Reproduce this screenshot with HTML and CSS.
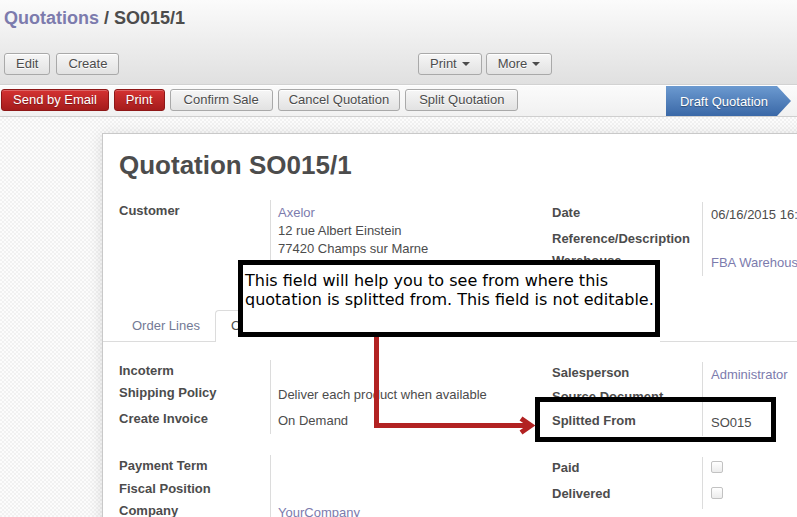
FILE: index.html
```html
<!DOCTYPE html>
<html>
<head>
<meta charset="utf-8">
<title>Quotations / SO015/1</title>
<link rel="stylesheet" href="styles.css">
</head>
<body>
<div class="page">
  <div class="header">
    <h2 class="crumbs"><a class="link">Quotations</a> / SO015/1</h2>
    <div class="cp">
      <div class="cp-left">
        <button class="btn">Edit</button>
        <button class="btn">Create</button>
      </div>
      <div class="cp-mid">
        <button class="btn">Print<span class="caret"></span></button>
        <button class="btn">More<span class="caret"></span></button>
      </div>
    </div>
  </div>
  <div class="statusbar">
    <div class="actions">
      <button class="btn btn-red">Send by Email</button>
      <button class="btn btn-red">Print</button>
      <button class="btn btn-wide">Confirm Sale</button>
      <button class="btn btn-narrow">Cancel Quotation</button>
      <button class="btn btn-wide">Split Quotation</button>
    </div>
    <div class="stage">Draft Quotation</div>
  </div>
  <div class="content">
    <div class="sheet">
      <h1 class="title">Quotation SO015/1</h1>

      <div class="group group-top">
        <div class="half half-l rows-auto">
          <div class="lbl">Customer</div>
          <div class="val"><a class="link">Axelor</a><br>12 rue Albert Einstein<br>77420 Champs sur Marne</div>
        </div>
        <div class="half half-r rows-26-22-26">
          <div class="lbl">Date</div>
          <div class="val">06/16/2015 16:48:22</div>
          <div class="lbl">Reference/Description</div>
          <div class="val"></div>
          <div class="lbl">Warehouse</div>
          <div class="val"><a class="link">FBA Warehouse</a></div>
        </div>
      </div>

      <div class="tabs">
        <div class="tab tab-first">Order Lines</div>
        <div class="tab tab-active">Other Information</div>
      </div>

      <div class="group group-2">
        <div class="half half-l rows-22-25-26">
          <div class="lbl">Incoterm</div>
          <div class="val"></div>
          <div class="lbl">Shipping Policy</div>
          <div class="val">Deliver each product when available</div>
          <div class="lbl">Create Invoice</div>
          <div class="val">On Demand</div>
        </div>
        <div class="half half-r rows-24-24-26">
          <div class="lbl">Salesperson</div>
          <div class="val"><a class="link">Administrator</a></div>
          <div class="lbl">Source Document</div>
          <div class="val"></div>
          <div class="lbl">Splitted From</div>
          <div class="val">SO015</div>
        </div>
      </div>

      <div class="group group-3">
        <div class="half half-l rows-22-22-22">
          <div class="lbl">Payment Term</div>
          <div class="val"></div>
          <div class="lbl">Fiscal Position</div>
          <div class="val"></div>
          <div class="lbl">Company</div>
          <div class="val"><a class="link">YourCompany</a></div>
        </div>
        <div class="half half-r rows-26-26">
          <div class="lbl">Paid</div>
          <div class="val"><span class="check"></span></div>
          <div class="lbl">Delivered</div>
          <div class="val"><span class="check"></span></div>
        </div>
      </div>
    </div>
  </div>

  <div class="note">This field will help you to see from where this<br>quotation is splitted from. This field is not editable.</div>
  <div class="highlight"></div>
  <svg class="arrow" width="797" height="517" viewBox="0 0 797 517">
    <path d="M376.5 337 V425.5 H528" fill="none" stroke="#b22222" stroke-width="5"/>
    <polyline points="521,418.5 531,425.5 521,432.5" fill="none" stroke="#b22222" stroke-width="5" stroke-linejoin="miter"/>
  </svg>
</div>
</body>
</html>
```
FILE: styles.css
```css
* { box-sizing: border-box; }
html, body { margin: 0; padding: 0; overflow: hidden; }
body {
  font-family: "Liberation Sans", Arial, sans-serif;
  font-size: 13px;
  color: #4c4c4c;
  background: #fff;
}
.page {
  position: relative;
  width: 797px;
  height: 517px;
  overflow: hidden;
}
.link { color: #7c7bad; text-decoration: none; }

/* header */
.header {
  height: 85px;
  padding: 0 4px;
  background: linear-gradient(#fbfbfb, #e0e0e0);
  border-bottom: 1px solid #d2d2d2;
}
.crumbs {
  margin: 0;
  padding-top: 7px;
  font-size: 18px;
  line-height: 22px;
  font-weight: bold;
  color: #4c4c4c;
}
.cp { display: flex; margin-top: 24px; }
.cp-left { width: 414px; display: flex; gap: 6px; }
.cp-mid { display: flex; gap: 4px; }

.btn {
  height: 22px;
  padding: 0 11px;
  font-family: "Liberation Sans", Arial, sans-serif;
  font-size: 13px;
  line-height: 20px;
  color: #4c4c4c;
  background: linear-gradient(#f6f6f6, #e2e2e2);
  border: 1px solid #a9a9a9;
  border-radius: 3px;
  box-shadow: inset 0 1px 0 #fff;
  text-shadow: 0 1px 0 #fff;
  display: inline-flex;
  align-items: center;
  white-space: nowrap;
}
.btn-wide { padding: 0 13px; }
.btn-narrow { padding: 0 10px; }
.caret {
  display: inline-block;
  width: 0; height: 0;
  margin-left: 5px;
  border-top: 4px solid #4c4c4c;
  border-left: 4px solid transparent;
  border-right: 4px solid transparent;
}
.btn-red {
  color: #fff;
  background: linear-gradient(#d43232, #a51c1c);
  border-color: #8e1717;
  box-shadow: inset 0 1px 0 rgba(255,255,255,0.25);
  text-shadow: 0 1px 1px rgba(0,0,0,0.3);
}

/* status bar */
.statusbar {
  height: 32px;
  display: flex;
  justify-content: space-between;
  background: linear-gradient(#fbfbfb, #f1f1f1);
  border-top: 1px solid #fff;
  border-bottom: 1px solid #cfcfcf;
}
.actions { display: flex; gap: 5px; padding: 3px 0 0 1px; }
.stage {
  width: 125px;
  height: 30px;
  margin-right: 6px;
  padding: 0 19px 0 10px;
  display: flex;
  align-items: center;
  justify-content: center;
  color: #fff;
  font-size: 13px;
  text-shadow: 0 1px 1px rgba(0,0,0,0.35);
  background: linear-gradient(#6c9ad0, #3a68a7);
  clip-path: polygon(0 0, calc(100% - 14px) 0, 100% 50%, calc(100% - 14px) 100%, 0 100%);
}

/* content */
.content {
  height: 400px;
  padding: 16px 0 0 102px;
  background-color: #f8f8f8;
  background-image: repeating-conic-gradient(#f1f1f1 0 25%, #fcfcfc 0 50%);
  background-size: 4px 4px;
}
.sheet {
  width: 760px;
  height: 420px;
  padding: 16px 0 0 16px;
  background: #fff;
  border: 1px solid #c9c9c9;
  border-right: none;
  box-shadow: 0 2px 14px rgba(0,0,0,0.12);
}
.title {
  margin: 0;
  font-size: 26px;
  line-height: 30px;
  font-weight: bold;
  color: #4c4c4c;
}

.group { display: flex; align-items: flex-start; }
.group-top { margin-top: 20px; }
.group-2 { margin-top: 18px; }
.group-3 { margin-top: 19px; }
.half { display: grid; }
.half-l { width: 433px; grid-template-columns: 151px 1fr; }
.half-r { flex: 1; grid-template-columns: 150px 1fr; margin-top: 2px; }
.rows-auto { grid-template-rows: auto; }
.rows-26-22-26 { grid-template-rows: 26px 22px 26px; }
.rows-22-25-26 { grid-template-rows: 22px 26px 26px; }
.rows-24-24-26 { grid-template-rows: 24px 24px 26px; }
.rows-22-22-22 { grid-template-rows: 23px 22px 22px; }
.rows-26-26 { grid-template-rows: 26px 26px; }

.lbl {
  padding-top: 2px;
  font-weight: bold;
  line-height: 18px;
  white-space: nowrap;
}
.val {
  padding: 4px 0 4px 7px;
  line-height: 18px;
  border-left: 1px solid #dcdcdc;
  white-space: nowrap;
}
.half-r .val { padding-left: 8px; }
.check {
  display: block;
  width: 12px;
  height: 12px;
  border: 1px solid #c2c2c2;
  border-radius: 2px;
  background: linear-gradient(#fff, #ececec);
}

/* tabs */
.tabs {
  display: flex;
  margin: 34px 0 0 -16px;
  padding-left: 12px;
  border-bottom: 1px solid #dcdcdc;
}
.tab {
  padding: 6px 15px 6px;
  line-height: 18px;
  color: #737a95;
  border: 1px solid transparent;
  border-bottom: none;
  border-radius: 4px 4px 0 0;
  margin-bottom: -1px;
  white-space: nowrap;
}
.tab-first { padding-left: 16px; padding-right: 14px; }
.tab-active {
  color: #4c4c4c;
  background: #fff;
  border-color: #dcdcdc;
  border-right-color: transparent;
  height: 32px;
  width: 445px;
}

/* annotations */
.note {
  position: absolute;
  left: 238px;
  top: 260px;
  width: 422px;
  height: 77px;
  padding: 6px 0 0 2px;
  background: #fff;
  border: 5px solid #000;
  color: #000;
  font-family: "DejaVu Sans", sans-serif;
  font-size: 16px;
  line-height: 19px;
  white-space: nowrap;
  overflow: hidden;
}
.highlight {
  position: absolute;
  left: 535px;
  top: 397px;
  width: 241px;
  height: 45px;
  border: 5px solid #000;
}
.arrow {
  position: absolute;
  left: 0;
  top: 0;
  pointer-events: none;
}
```
